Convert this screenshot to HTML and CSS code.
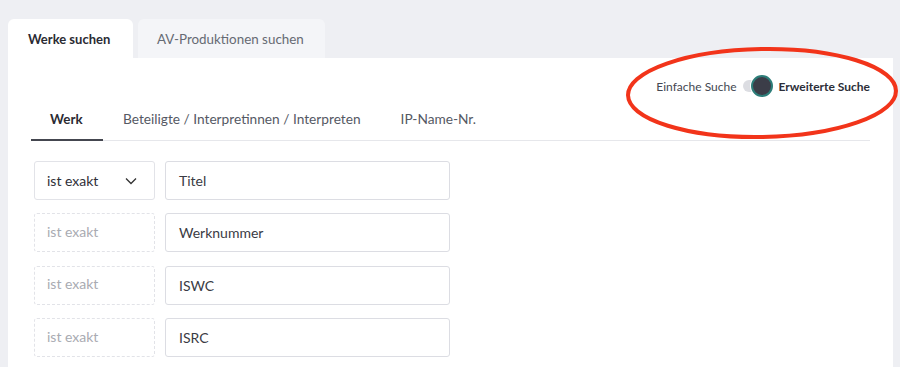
FILE: index.html
```html
<!DOCTYPE html>
<html>
<head>
	<title>Werke suchen</title>
	<meta charset="utf-8">
	<meta name="viewport" content="width=device-width, initial-scale=1">
	<link rel="stylesheet" href="styles.css">
</head>
<body>
    <div class="page">
        <div class="tabs">
            <div class="tab active">Werke suchen</div>
            <div class="tab">AV-Produktionen suchen</div>
        </div>

        <div class="card">
            <div class="mode">
                <span class="mode-label">Einfache Suche</span>
                <span class="switch"><span class="knob"></span></span>
                <span class="mode-label strong">Erweiterte Suche</span>
                <svg class="marker" width="276" height="96" viewBox="0 0 276 96">
                    <ellipse cx="138" cy="48" rx="134" ry="44" transform="rotate(-1 138 48)" fill="none" stroke="#f2341a" stroke-width="4"/>
                </svg>
            </div>

            <div class="subtabs">
                <div class="subtab active">Werk</div>
                <div class="subtab">Beteiligte / Interpretinnen / Interpreten</div>
                <div class="subtab">IP-Name-Nr.</div>
            </div>

            <div class="rows">
                <div class="row">
                    <div class="select">
                        <span>ist exakt</span>
                        <svg width="12" height="8" viewBox="0 0 12 8"><path d="M1 1.5 L6 6.5 L11 1.5" fill="none" stroke="#333" stroke-width="1.3"/></svg>
                    </div>
                    <div class="field">Titel</div>
                </div>
                <div class="row">
                    <div class="select disabled"><span>ist exakt</span></div>
                    <div class="field">Werknummer</div>
                </div>
                <div class="row">
                    <div class="select disabled"><span>ist exakt</span></div>
                    <div class="field">ISWC</div>
                </div>
                <div class="row">
                    <div class="select disabled"><span>ist exakt</span></div>
                    <div class="field">ISRC</div>
                </div>
            </div>
        </div>
    </div>
</body>
</html>
```
FILE: styles.css
```css
body {
	font-family: "Lato", "Open Sans", sans-serif;
	background-color: #eeeff3;
	margin: 0;
	padding: 0;
	color: #333;
}
.page {
	padding: 19px 7px 0 8px;
}
.tabs {
	display: flex;
	gap: 5px;
}
.tab {
	height: 39px;
	padding: 0 19px;
	display: flex;
	align-items: center;
	font-size: 13.4px;
	color: #666a73;
	background-color: #f4f5f8;
	border-radius: 6px 6px 0 0;
}
.tab.active {
	background-color: #fff;
	color: #2b2b33;
	font-weight: bold;
	font-size: 13px;
	width: 86px;
	padding-left: 20px;
}
.tab:last-child {
	width: 149px;
}
.card {
	background-color: #fff;
	height: 320px;
	padding: 0 23px 0 23px;
}
.mode {
	position: relative;
	display: flex;
	justify-content: flex-end;
	align-items: center;
	gap: 6px;
	height: 56px;
	margin-bottom: -3px;
	font-size: 12px;
	color: #444852;
}
.mode-label.strong {
	font-weight: bold;
	color: #2b2e38;
	margin-left: 2px;
}
.switch {
	position: relative;
	width: 20px;
	height: 12px;
	border-radius: 6px;
	background-color: #dcdde2;
	margin-right: 8px;
}
.knob {
	position: absolute;
	left: 8px;
	top: -5px;
	width: 18px;
	height: 18px;
	border-radius: 50%;
	background-color: #3b3d48;
	border: 2px solid #2d7d79;
	box-shadow: 0 0 0 1px #fff;
}
.marker {
	position: absolute;
	right: -30px;
	top: -13px;
	pointer-events: none;
}
.subtabs {
	display: flex;
	border-bottom: 1px solid #e6e7eb;
}
.subtab {
	font-size: 13.7px;
	color: #555964;
	padding: 0 20px 12px 20px;
	line-height: 16px;
	border-bottom: 2px solid transparent;
	margin-bottom: -1px;
}
.subtab.active {
	font-weight: bold;
	font-size: 13.4px;
	color: #2b2b33;
	border-bottom-color: #44464f;
	padding-left: 19px;
	width: 33px;
}
.rows {
	display: flex;
	flex-direction: column;
	gap: 13.4px;
	padding-top: 20px;
	padding-left: 3px;
}
.row {
	display: flex;
	gap: 10px;
}
.select {
	width: 121px;
	height: 39px;
	box-sizing: border-box;
	border: 1px solid #e2e3e8;
	border-radius: 3px;
	display: flex;
	align-items: center;
	justify-content: space-between;
	padding: 0 17px 0 12px;
	font-size: 14px;
	color: #2f3038;
}
.select.disabled {
	border-style: dashed;
	color: #a9abb2;
	padding-bottom: 3px;
}
.field {
	width: 285px;
	height: 39px;
	box-sizing: border-box;
	border: 1px solid #dcdde3;
	border-radius: 3px;
	display: flex;
	align-items: center;
	padding: 0 13px;
	font-size: 14px;
	color: #3a3b44;
}
```
